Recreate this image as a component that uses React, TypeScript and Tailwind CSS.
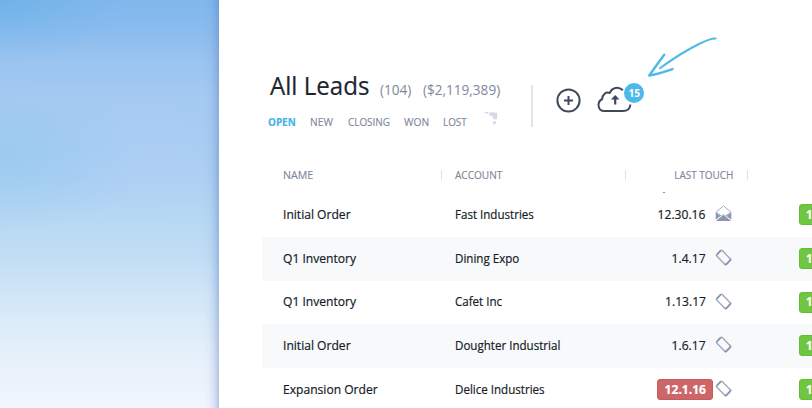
import type { ReactNode } from "react";

const rows = [
  { name: "Initial Order", account: "Fast Industries", date: "12.30.16", icon: "mail" },
  { name: "Q1 Inventory", account: "Dining Expo", date: "1.4.17", icon: "phone" },
  { name: "Q1 Inventory", account: "Cafet Inc", date: "1.13.17", icon: "phone" },
  { name: "Initial Order", account: "Doughter Industrial", date: "1.6.17", icon: "phone" },
  { name: "Expansion Order", account: "Delice Industries", date: "12.1.16", icon: "phone", late: true },
];

function Text({ children, className = "" }: { children: ReactNode; className?: string }) {
  return <span className={`inline-block whitespace-nowrap ${className}`}>{children}</span>;
}

function Mail() {
  return (
    <svg width="17" height="17" viewBox="0 0 17 17" fill="none">
      <path d="M1.2 7 8.5 .9 15.8 7 10.8 11 8.5 9.4 6.2 11Z" fill="#fff" stroke="#a5adc0" strokeWidth="1" />
      <path d="M.7 7.2 5.6 11 .7 14.8ZM16.3 7.2 11.4 11l4.9 3.8ZM.9 15.9 6.3 11.6 8.5 10.3l2.2 1.3 5.4 4.3Z" fill="#8c96b0" />
    </svg>
  );
}

function Phone() {
  return (
    <svg width="17" height="17" viewBox="0 0 17 17" fill="none">
      <path d="M1.7 5.6 5.6 1.5Q6.4.8 7.2 1.5L15.2 9.8Q15.8 10.5 15.2 11.2L11.4 15.2Q10.6 15.9 9.8 15.2L1.7 7Q1 6.3 1.7 5.6Z" stroke="#9da6bb" strokeWidth="1.3" />
      <path d="M1.5 6 6 1.3M9.8 15.1q.8.8 1.6 0l3.9-4q.5-.6 0-1.3" stroke="#8a94ae" strokeWidth="1.8" />
    </svg>
  );
}

function Sky() {
  return (
    <div className="relative w-[219px] shrink-0 overflow-hidden bg-[linear-gradient(180deg,#80b7ec_0px,#8abcee_30px,#9ac3f0_60px,#a5caf2_95px,#a8ccf2_145px,#add0f3_180px,#b7d8f3_220px,#c2def5_260px,#d3e7f8_300px,#e3eff9_345px,#eaf1fb_370px,#f1f6fe_408px)]">
      <div className="absolute inset-0 bg-[radial-gradient(ellipse_130px_60px_at_0px_0px,#66b0e6aa,#66b0e630_55%,transparent),radial-gradient(ellipse_150px_75px_at_0px_158px,#8cc8ec77,#8cc8ec38_50%,transparent),radial-gradient(ellipse_110px_60px_at_135px_160px,#b4d0f655,transparent)]" />
      <div className="absolute inset-y-0 right-0 w-4 bg-[linear-gradient(90deg,transparent,#5b80c80c_40%,#5478bd28_70%,#5478bd60)]" />
    </div>
  );
}

export default function App() {
  return (
    <div className="flex h-[408px] w-[812px] overflow-hidden bg-white font-['Open_Sans',sans-serif] text-[13px] text-[#141b27]">
      <Sky />
      <main className="relative w-[593px] shrink-0 overflow-hidden">
        <header className="flex h-[160px] pt-[68px]">
          <div className="w-[312px] shrink-0 pl-[50px]">
            <div className="flex h-[36px] items-baseline text-[#7e889b]">
              <h1 className="w-[111px] shrink-0 pl-px"><Text className="relative -top-px origin-left scale-x-[.945] text-[25.5px] leading-[36px] text-[#1c2531] [-webkit-text-stroke:0.2px_#1c2531]">All Leads</Text></h1>
              <div className="w-[43px] shrink-0"><Text className="relative -top-px origin-left scale-x-[.97] text-[14px]">(104)</Text></div>
              <Text className="relative -top-px origin-left scale-x-[.97] text-[14px]">($2,119,389)</Text>
            </div>
            <nav className="flex pt-[9px] text-[11px] leading-[18px] text-[#7e889b] [-webkit-text-stroke:0.15px_currentColor]">
              <div className="-ml-px w-[42px]"><Text className="origin-left scale-x-[.9] font-bold text-[#43b2e8]">OPEN</Text></div>
              <div className="w-[38px]"><Text className="origin-left scale-x-[.93]">NEW</Text></div>
              <div className="w-[56px]"><Text className="origin-left scale-x-[.9]">CLOSING</Text></div>
              <div className="w-[39px]"><Text className="origin-left scale-x-[.93]">WON</Text></div>
              <div className="w-[41px]"><Text className="origin-left scale-x-[.9]">LOST</Text></div>
              <svg className="-mt-[3px]" width="15" height="18" viewBox="0 0 15 18" fill="#d6dae4">
                <path d="M.5 2.4Q2 1.2 4.2 2.2L4.6 3.6 1.2 3.4ZM5.2 2.6Q9 1.6 13.2 2.8Q13.8 7 12.4 9.6L9 9Q9.6 7 8.4 6.2L5.2 5.2ZM9.2 11.4l3-.5-.6 3.2-2.4.6Z" />
              </svg>
            </nav>
          </div>
          <div className="mt-[17px] h-[42px] w-[2px] bg-[#e4e5ea]" />
          <svg className="ml-[23px] mt-[20px]" width="25" height="25" viewBox="0 0 25 25" fill="none" stroke="#3e4a59" strokeWidth="2">
            <circle cx="12.5" cy="12.5" r="11.1" />
            <path d="M12.5 8v9M8 12.5h9" />
          </svg>
          <div className="relative ml-[15px] mt-[13px] h-[32px] w-[50px]">
            <svg width="50" height="32" viewBox="0 0 50 32" fill="none" stroke="#3e4a59" strokeWidth="2">
              <path d="M26.8 9.3C22.5 5.2 16 6.3 13.8 12C10 10.6 6.4 13.3 6.2 18C3.8 19.2 2.5 21.2 2.5 24C2.5 27.8 5 30 8.3 30H27C31.5 30 34 27.5 34.4 23.5" strokeLinejoin="round" />
              <path d="M19.2 23.5v-8" strokeWidth="2.2" />
              <path d="m14.9 18.6 4.3-4.7 4.3 4.7Z" fill="#3e4a59" stroke="none" />
            </svg>
            <div className="absolute left-[28px] top-[2px] flex h-5 w-5 items-center justify-center rounded-full bg-[#4bb9e9] text-[11px] font-bold text-white"><Text className="scale-x-[.93]">15</Text></div>
          </div>
        </header>
        <svg className="absolute left-[427px] top-[35px]" width="75" height="44" viewBox="0 0 75 44" fill="none" stroke="#4eb8e8" strokeLinecap="round" strokeLinejoin="round">
          <path d="M69.5 3.5C65 3.4 58 6.5 53 9C39 16 25 25 14 33.3" strokeWidth="2" />
          <path d="M18.2 19.7Q11 29.5 3.2 40.5Q13 38.8 26.5 34.1" strokeWidth="2.4" />
        </svg>
        <section className="ml-[43px] w-[600px]">
          <div className="flex h-[33px] pt-[6px] text-[11px] leading-[18px] text-[#7e889b] [-webkit-text-stroke:0.15px_currentColor]">
            <div className="w-[179px] pl-[21px]"><Text className="origin-left scale-x-[.96]">NAME</Text></div>
            <div className="mt-1 h-[10px] w-px bg-[#dfe2e8]" />
            <div className="w-[183px] pl-[13px]"><Text className="origin-left scale-x-[.915]">ACCOUNT</Text></div>
            <div className="mt-1 h-[10px] w-px bg-[#dfe2e8]" />
            <div className="relative w-[121px] pr-[14px] text-right">
              <Text className="origin-right scale-x-[.905]">LAST TOUCH</Text>
              <div className="absolute left-[37px] top-[26px] h-px w-[2px] bg-[#8790a4]" />
            </div>
            <div className="mt-1 h-[10px] w-px bg-[#dfe2e8]" />
          </div>
          {rows.map((row, i) => (
            <div key={i} className={`flex h-[43.75px] items-center pb-[0.5px] [-webkit-text-stroke:0.2px_currentColor] ${i % 2 ? "bg-[#f7f9fb]" : "bg-white"}`}>
              <div className="w-[193px] shrink-0 pl-[21px]"><Text className="origin-left scale-x-[.93]">{row.name}</Text></div>
              <div className="w-[190px] shrink-0"><Text className="origin-left scale-x-[.89]">{row.account}</Text></div>
              <div className="flex w-[68px] shrink-0 justify-end">
                <div className={row.late ? "flex h-[21px] w-[56px] items-center justify-center rounded-[3px] border border-[#c25c5e] bg-[#cc6668] font-bold text-white" : "pr-[7.5px]"}>
                  <Text className={row.late ? "scale-x-[.93]" : "origin-right scale-x-[.93]"}>{row.date}</Text>
                </div>
              </div>
              <div className="-mt-[2px] ml-[2px] w-[84px] shrink-0">{row.icon === "mail" ? <Mail /> : <Phone />}</div>
              <div className="flex h-[21px] w-[50px] shrink-0 items-center rounded-[3px] border border-[#65bb38] bg-[#70c640] pl-[6px] font-bold text-white">
                <Text className="origin-left scale-x-[.88]">1</Text>
              </div>
            </div>
          ))}
        </section>
      </main>
    </div>
  );
}
